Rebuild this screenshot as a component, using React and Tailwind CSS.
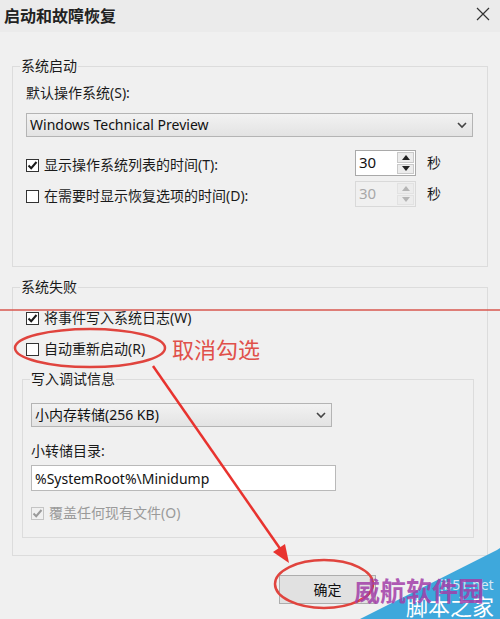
import React from 'react';

function Check({ checked, disabled }) {
  return (
    <span
      className={`flex h-[13px] w-[13px] shrink-0 items-center justify-center border ${
        disabled ? 'border-[#c4c4c4] bg-[#f0f0f0]' : 'border-[#333] bg-white'
      }`}
    >
      {checked && (
        <svg width="11" height="11" viewBox="0 0 11 11">
          <path
            d="M1.5 5.5 L4.2 8.2 L9.5 2"
            fill="none"
            stroke={disabled ? '#9a9a9a' : '#1a1a1a'}
            strokeWidth="2"
          />
        </svg>
      )}
    </span>
  );
}

function Spinner({ disabled }) {
  const arrow = disabled ? '#b5b5b5' : '#222';
  return (
    <div
      className={`flex h-[26px] w-[61px] border ${
        disabled ? 'border-[#d9d9d9] bg-[#f0f0f0] text-[#a8a8a8]' : 'border-[#a9a9a9] bg-white text-[#111]'
      }`}
    >
      <span className="flex-1 pl-[3px] text-[15px] leading-[22px]">30</span>
      <div className="flex w-[19px] flex-col gap-[1px] p-[1px]">
        <span className={`flex flex-1 items-center justify-center border ${disabled ? 'border-[#e2e2e2]' : 'border-[#c9c9c9]'} bg-[#ececec]`}>
          <svg width="8" height="5" viewBox="0 0 8 5"><path d="M0 5 L4 0 L8 5Z" fill={arrow} /></svg>
        </span>
        <span className={`flex flex-1 items-center justify-center border ${disabled ? 'border-[#e2e2e2]' : 'border-[#c9c9c9]'} bg-[#ececec]`}>
          <svg width="8" height="5" viewBox="0 0 8 5"><path d="M0 0 L4 5 L8 0Z" fill={arrow} /></svg>
        </span>
      </div>
    </div>
  );
}

function Select({ value, className }) {
  return (
    <div
      className={`flex h-[24px] items-center justify-between border border-[#b4b4b4] bg-gradient-to-b from-[#f2f2f2] to-[#e3e3e3] pl-[3px] pr-[5px] text-[14px] text-[#111] ${className}`}
    >
      <span className="leading-[22px]">{value}</span>
      <svg width="10" height="7" viewBox="0 0 10 7">
        <path d="M1 1 L5 5 L9 1" fill="none" stroke="#444" strokeWidth="1.6" />
      </svg>
    </div>
  );
}

export default function App() {
  return (
    <div className="relative h-[619px] w-[500px] overflow-hidden bg-[#f0f0f0] font-['Noto_Sans','Noto_Sans_CJK_SC',sans-serif] text-[14px] text-[#1a1a1a]">
      {/* Title bar */}
      <div className="flex h-[32px] items-center justify-between bg-[#ebebeb] pl-[4px] pr-[10px]">
        <span className="text-[16px] font-bold leading-[20px] text-[#222]">启动和故障恢复</span>
        <svg width="14" height="14" viewBox="0 0 14 14" className="mb-[4px]">
          <path d="M1 1 L13 13 M13 1 L1 13" stroke="#333" strokeWidth="1.2" />
        </svg>
      </div>

      <div className="px-[12px]">
        {/* 系统启动 */}
        <fieldset className="mt-[24px] h-[211px] w-[476px] border border-[#dcdcdc] pl-[13px]">
          <legend className="-ml-[6px] px-[1px] leading-[20px]">系统启动</legend>
          <div className="mt-[7px] leading-[20px]">默认操作系统(S):</div>
          <Select value="Windows Technical Preview" className="mt-[10px] w-[447px]" />
          <div className="mt-[13px] flex items-center">
            <div className="flex w-[329px] items-center gap-[5px] pt-[4px]">
              <Check checked />
              <span className="leading-[20px]">显示操作系统列表的时间(T):</span>
            </div>
            <Spinner />
            <span className="ml-[11px] leading-[20px]">秒</span>
          </div>
          <div className="mt-[5px] flex items-center">
            <div className="flex w-[329px] items-center gap-[5px] pt-[4px]">
              <Check />
              <span className="leading-[20px]">在需要时显示恢复选项的时间(D):</span>
            </div>
            <Spinner disabled />
            <span className="ml-[11px] leading-[20px]">秒</span>
          </div>
        </fieldset>

        {/* 系统失败 */}
        <fieldset className="mt-[10px] h-[279px] w-[476px] border border-[#dcdcdc]">
          <legend className="ml-[7px] px-[1px] leading-[20px]">系统失败</legend>
          <div className="ml-[13px] mt-[11px] flex h-[20px] items-center gap-[5px]">
            <Check checked />
            <span className="leading-[20px]">将事件写入系统日志(W)</span>
          </div>
          <div className="ml-[13px] mt-[11px] flex h-[20px] items-center gap-[5px]">
            <Check />
            <span className="leading-[20px]">自动重新启动(R)</span>
            <span className="ml-[22px] text-[22px] leading-[20px] text-[#e0504a]">取消勾选</span>
          </div>

          {/* 写入调试信息 */}
          <fieldset className="ml-[9px] mt-[10px] h-[169px] w-[452px] border border-[#dcdcdc]">
            <legend className="ml-[7px] px-[1px] leading-[20px]">写入调试信息</legend>
            <Select value="小内存转储(256 KB)" className="ml-[8px] mt-[14px] w-[301px]" />
            <div className="ml-[8px] mt-[14px] leading-[20px]">小转储目录:</div>
            <div className="ml-[8px] mt-[4px] flex h-[26px] w-[305px] items-center border border-[#b9b9b9] bg-white pl-[3px] text-[14px] text-[#111]">
              %SystemRoot%\Minidump
            </div>
            <div className="ml-[8px] mt-[12px] flex h-[20px] items-center gap-[5px] text-[#9a9a9a]">
              <Check checked disabled />
              <span className="leading-[20px]">覆盖任何现有文件(O)</span>
            </div>
          </fieldset>
        </fieldset>

        <div className="mt-[19px] flex">
          <button className="ml-[267px] h-[29px] w-[97px] border border-[#adadad] bg-[#e1e1e1] text-[14px] text-[#111]">
            确定
          </button>
        </div>
      </div>

      {/* Annotations */}
      <svg className="pointer-events-none absolute left-0 top-0" width="500" height="619" viewBox="0 0 500 619">
        <line x1="0" y1="310" x2="500" y2="310" stroke="#d9574f" strokeWidth="1.5" />
        <ellipse cx="90" cy="348" rx="75" ry="19" fill="none" stroke="#e0443e" strokeWidth="2.5" />
        <line x1="153" y1="366" x2="281" y2="550" stroke="#e8332f" strokeWidth="2.5" />
        <polygon points="289,563 285,544 273,552" fill="#e8332f" />
        <ellipse cx="324" cy="584" rx="49" ry="24" fill="none" stroke="#e0443e" strokeWidth="2.5" />
        <polygon points="497,550 500,548 500,619 360,619" fill="#3ea8dc" />
      </svg>

      {/* Watermark */}
      <span className="absolute left-[440px] top-[577px] text-[14px] leading-[16px] text-[#d6e9f5]">jb51.net</span>
      <span className="absolute left-[406px] top-[594px] text-[22px] leading-[24px] text-white">脚本之家</span>
      <span className="absolute left-[354px] top-[576px] text-[26px] font-bold leading-[30px] text-[#a23ea8]/85">威航软件园</span>
    </div>
  );
}
